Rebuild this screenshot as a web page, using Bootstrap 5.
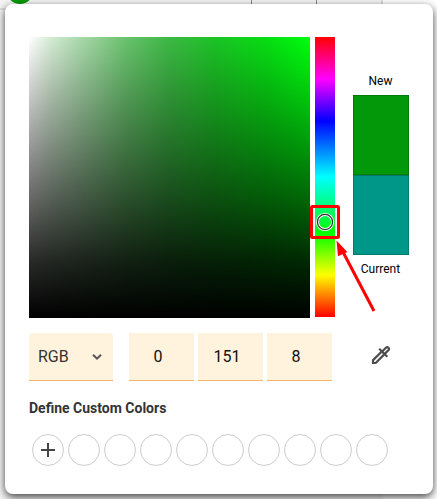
<!DOCTYPE html>
<html lang="en">
<head>
<meta charset="utf-8">
<title>Color picker</title>
<link href="https://cdn.jsdelivr.net/npm/bootstrap@5.3.0/dist/css/bootstrap.min.css" rel="stylesheet">
<style>
body{width:437px;height:499px;background:#f5f5f5;font-family:Roboto,sans-serif;color:#333}
.backdrop-top{height:10px;border-bottom:2px solid #ddd}
.peek-circle{left:7px;top:-22px;width:26px;height:26px;background:#079a08}
.tick{top:0;width:1px;height:5px;background:#888}
.tick-a{left:251px}.tick-b{left:316px}.tick-c{left:381px;width:2px;background:#ddd}
.peek-white{left:383px;top:0;width:54px;height:499px;background:#fff}
.picker{margin:4px 4px 4px 5px;height:490px;border-radius:8px;padding:33px 24px 0;box-shadow:0 3px 8px rgba(0,0,0,.75)}
.sat-box{width:281px;height:281px;background:linear-gradient(to bottom,transparent,rgba(0,0,0,.35) 34%,rgba(0,0,0,.62) 60%,rgba(0,0,0,.84) 80%,#000),linear-gradient(to right,#fff,#d3ead3 8%,#a2d6a4 20%,#68c26c 35%,#3cb944 50%,#1cc326 66%,#07dd13 84%,#00ff0e)}
.hue-bar{width:20px;height:280px;margin-left:5px;background:linear-gradient(to bottom,red,#f0f 15%,#00f 30%,#0ff 50%,#0f0 70%,#ff0 85%,red)}
.compare{width:56px;margin-left:18px;padding-top:37px;font-size:12px;line-height:14px;color:#000}
.compare-label{margin-right:1px}
.swatch{height:80px;border:1px solid}
.swatch-new{background:#029809;border-color:#027a07;margin-top:7px}
.swatch-current{background:#009688;border-color:#007a6e;margin-bottom:7px}
.annotation{left:305px;top:200px}
.field{height:48px;background:#fff3de;border-bottom:1px solid #f7b468;font-size:16px}
.field-mode{width:84px;padding:0 10px 0 9px;border-radius:4px 4px 0 0}
.field-num{width:65px;margin-right:4px;padding-right:7px;color:#111}
.inputs{margin-top:15px}
.dropper{margin-top:10px}
.section-title{font-size:14px;line-height:20px;margin-top:17px}
.customs{gap:4px;margin:16px 0 0 3px}
.slot{width:32px;height:32px;border:1px solid #ccc}
</style>
<script src="https://cdn.jsdelivr.net/npm/bootstrap@5.3.0/dist/js/bootstrap.bundle.min.js"></script>
</head>
<body class="position-relative overflow-hidden">
<div class="position-absolute top-0 start-0 w-100 backdrop-top"></div>
<div class="position-absolute peek-white"></div>
<div class="position-absolute rounded-circle peek-circle"></div>
<div class="position-absolute tick tick-a"></div><div class="position-absolute tick tick-b"></div><div class="position-absolute tick tick-c"></div>
<div class="d-flow-root pt-1">
<main class="picker bg-white position-relative mt-0">
  <div class="d-flex align-items-start">
    <div class="sat-box"></div>
    <div class="hue-bar"></div>
    <div class="compare text-center">
      <div class="compare-label">New</div>
      <div class="swatch swatch-new"></div>
      <div class="swatch swatch-current"></div>
      <div class="compare-label">Current</div>
    </div>
  </div>
  <div class="d-flex inputs">
    <div class="field field-mode d-flex align-items-center justify-content-between me-3">RGB
      <svg width="12" height="8" viewBox="0 0 12 8" fill="none" stroke="#555" stroke-width="2"><path d="M2 1.7l4 4 4-4"/></svg>
    </div>
    <div class="field field-num d-flex align-items-center justify-content-center">0</div>
    <div class="field field-num d-flex align-items-center justify-content-center">151</div>
    <div class="field field-num d-flex align-items-center justify-content-center">8</div>
    <svg class="ms-auto me-3 dropper" width="24" height="24" viewBox="0 0 24 24" fill="none" stroke="#4d4d4d" stroke-width="2.200"><path d="M10.200 5.700l8.100 8.100M13 8.200L4 17.300V20h2.700l9.100-9.100M13.500 8.200l3.400-3.500a1.700 1.700 0 0 1 2.500 2.500l-3.500 3.400"/></svg>
  </div>
  <div class="section-title fw-bold">Define Custom Colors</div>
  <div class="d-flex customs">
    <div class="slot rounded-circle d-flex align-items-center justify-content-center"><svg width="14" height="14" viewBox="0 0 14 14" stroke="#444" stroke-width="2"><path d="M7 0v14M0 7h14"/></svg></div>
    <div class="slot rounded-circle"></div><div class="slot rounded-circle"></div><div class="slot rounded-circle"></div><div class="slot rounded-circle"></div><div class="slot rounded-circle"></div><div class="slot rounded-circle"></div><div class="slot rounded-circle"></div><div class="slot rounded-circle"></div><div class="slot rounded-circle"></div>
  </div>
</main>
</div>
<svg class="position-absolute annotation" width="80" height="120" viewBox="305 200 80 120" fill="none">
  <circle cx="325" cy="222" r="7.6" stroke="#fff" stroke-width="3"/><circle cx="325" cy="222" r="7.6" stroke="#333" stroke-width="1.3"/>
  <rect x="311.500" y="206.500" width="27" height="31" rx="1" stroke="#f00" stroke-width="3"/>
  <path d="M374 311L343 252" stroke="#f00" stroke-width="3"/><path d="M336.500 240.500l10.800 11.500-9.300 4.200z" fill="#f00"/>
</svg>
</body>
</html>
